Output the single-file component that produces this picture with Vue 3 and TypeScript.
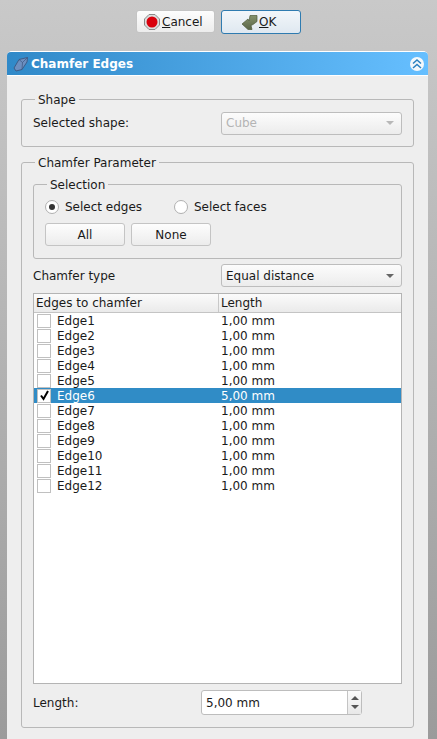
<script setup lang="ts">
interface EdgeRow {
  name: string
  length: string
  checked: boolean
}

const edges: EdgeRow[] = Array.from({ length: 12 }, (_, i) => ({
  name: `Edge${i + 1}`,
  length: i === 5 ? '5,00 mm' : '1,00 mm',
  checked: i === 5,
}))
</script>

<template>
  <div class="page">
    <div class="actions">
      <button class="btn action cancel">
        <svg class="ico" width="16" height="16" viewBox="0 0 16 16">
          <path d="M5 .5h6L15.500 5v6L11 15.500H5L.5 11V5z" fill="#dcdcdc" stroke="#8a8a8a" />
          <circle cx="8" cy="8" r="5.500" fill="#d9000c" />
        </svg>
        <span><u>C</u>ancel</span>
      </button>
      <button class="btn action ok">
        <svg class="ico" width="17" height="16" viewBox="0 0 17 16">
          <defs>
            <linearGradient id="okFill" x1="0" y1="0" x2="0" y2="1">
              <stop offset="0" stop-color="#85926c" />
              <stop offset="1" stop-color="#5a6648" />
            </linearGradient>
          </defs>
          <path d="M1 10L7 5l1 2 1-5.500h7v6l-4 3-2 1 1 4H7z" fill="url(#okFill)" stroke="#4d5a3a" stroke-width=".7" />
        </svg>
        <span><u>O</u>K</span>
      </button>
    </div>

    <section class="panel">
      <header class="panel-head">
        <svg class="head-ico" width="16" height="16" viewBox="0 0 16 16">
          <path d="M1 12L6 3.500 14.500 1.500 14 6 9 13.500 3 15z" fill="#6d8fc0" stroke="#3c5680" stroke-width=".9" />
          <path d="M6 3.500l3.500 3L14.500 1.500M9.500 6.500L9 13.500" fill="none" stroke="#3c5680" stroke-width=".7" />
        </svg>
        <span class="head-title">Chamfer Edges</span>
        <span class="collapse">
          <svg width="10" height="10" viewBox="0 0 10 10">
            <path d="M1 4.500L5 1l4 3.500M1 9L5 5.500 9 9" fill="none" stroke="#2a80c0" stroke-width="1.500" />
          </svg>
        </span>
      </header>

      <div class="panel-body">
        <fieldset class="group shape-group">
          <legend>Shape</legend>
          <div class="form-row">
            <span class="lbl">Selected shape:</span>
            <div class="combo disabled">
              <span>Cube</span>
              <i class="arrow"></i>
            </div>
          </div>
        </fieldset>

        <fieldset class="group param-group">
          <legend>Chamfer Parameter</legend>

          <fieldset class="group selection">
            <legend>Selection</legend>
            <div class="radios">
              <label class="radio first"><i class="dot on"></i>Select edges</label>
              <label class="radio"><i class="dot"></i>Select faces</label>
            </div>
            <div class="sel-buttons">
              <button class="btn small">All</button>
              <button class="btn small">None</button>
            </div>
          </fieldset>

          <div class="form-row type-row">
            <span class="lbl">Chamfer type</span>
            <div class="combo">
              <span>Equal distance</span>
              <i class="arrow"></i>
            </div>
          </div>

          <div class="table">
            <div class="thead">
              <div class="th name-col">Edges to chamfer</div>
              <div class="th">Length</div>
            </div>
            <div class="tbody">
              <div v-for="edge in edges" :key="edge.name" class="tr" :class="{ selected: edge.checked }">
                <div class="name-col cell">
                  <i class="check">
                    <svg v-if="edge.checked" width="11" height="11" viewBox="0 0 11 11">
                      <path d="M2 5.500l2.500 3.500L9 1" fill="none" stroke="#000" stroke-width="2" />
                    </svg>
                  </i>
                  <span class="cell-text">{{ edge.name }}</span>
                </div>
                <div class="cell len"><span class="cell-text">{{ edge.length }}</span></div>
              </div>
            </div>
          </div>

          <div class="length-row">
            <span class="lbl">Length:</span>
            <div class="spin">
              <span class="spin-val">5,00 mm</span>
              <div class="spin-btns">
                <i class="up"></i>
                <i class="down"></i>
              </div>
            </div>
          </div>
        </fieldset>
      </div>
    </section>
  </div>
</template>

<style>
html,
body {
  margin: 0;
  height: 100%;
  overflow: hidden;
}
</style>

<style scoped>
.page {
  width: 437px;
  height: 739px;
  overflow: hidden;
  box-sizing: border-box;
  padding-top: 10px;
  background: linear-gradient(180deg, #c9c9c9 0%, #9b9b9b 100%);
  font-family: "DejaVu Sans", sans-serif;
  font-size: 12px;
  color: #1a1a1a;
}

.actions {
  display: flex;
  justify-content: center;
  gap: 6px;
  height: 24px;
  margin-bottom: 17px;
}

.btn {
  box-sizing: border-box;
  font: inherit;
  color: inherit;
  padding: 0;
  border: 1px solid #c4c4c4;
  border-radius: 3px;
  background: linear-gradient(180deg, #fdfdfd, #ececec);
  display: flex;
  align-items: center;
  justify-content: center;
}

.action {
  height: 24px;
  justify-content: flex-start;
}

.action.cancel {
  width: 79px;
  height: 23px;
  padding-left: 7px;
  gap: 2px;
}

.action.ok {
  width: 80px;
  padding-left: 19px;
  gap: 1px;
  border-color: #2f7bb0;
  background: linear-gradient(180deg, #f2f6fa, #dfe8f0);
}

.ico {
  flex: none;
}

.panel {
  width: 421px;
  margin-left: 7px;
  height: 700px;
  background: #eeeeee;
  border-radius: 5px 5px 0 0;
  border-top: 1px solid #fff;
}

.panel-head {
  height: 23px;
  display: flex;
  align-items: center;
  padding: 0 4px 0 6px;
  background: linear-gradient(90deg, #3089c8 0%, #66bfff 100%);
  border-radius: 4px 4px 0 0;
  border-bottom: 1px solid #fff;
}

.head-ico {
  margin-right: 2px;
}

.head-title {
  flex: 1;
  color: #fff;
  font-weight: bold;
}

.collapse {
  width: 14px;
  height: 14px;
  border-radius: 50%;
  background: #f4f8fb;
  display: flex;
  align-items: center;
  justify-content: center;
}

.panel-body {
  padding: 16px 14px 0;
}

.group {
  box-sizing: border-box;
  margin: 0;
  padding: 0;
  border: 1px solid #b8b8b8;
  border-radius: 3px;
  min-width: 0;
}

.group legend {
  padding: 1px 3px 0;
  margin-left: 2px;
  line-height: 14px;
}

.shape-group {
  height: 55px;
  padding: 0 11px;
  margin-bottom: 8px;
}

.param-group {
  padding: 6px 11px 0;
  height: 573px;
}

.form-row {
  display: flex;
  align-items: center;
  justify-content: space-between;
  height: 24px;
}

.shape-group .form-row {
  margin-top: 4px;
}

.combo {
  box-sizing: border-box;
  width: 181px;
  height: 23px;
  border: 1px solid #bdbdbd;
  border-radius: 3px;
  background: linear-gradient(180deg, #fcfcfc, #ececec);
  display: flex;
  align-items: center;
  justify-content: space-between;
  padding: 0 7px 0 4px;
}

.combo.disabled {
  color: #b4b4b4;
}

.arrow {
  width: 0;
  height: 0;
  border-left: 4px solid transparent;
  border-right: 4px solid transparent;
  border-top: 4px solid #666;
}

.combo.disabled .arrow {
  border-top-color: #b8b8b8;
}

.selection {
  height: 83px;
  padding: 0 11px;
}

.selection legend {
  line-height: 16px;
}

.radios {
  display: flex;
  height: 20px;
  align-items: center;
  margin-top: 4px;
}

.radio {
  display: flex;
  align-items: center;
  gap: 6px;
}

.radio.first {
  width: 129px;
}

.dot {
  box-sizing: border-box;
  width: 14px;
  height: 14px;
  border: 1px solid #b0b0b0;
  border-radius: 50%;
  background: #fff;
  display: flex;
  align-items: center;
  justify-content: center;
}

.dot.on::after {
  content: "";
  width: 6px;
  height: 6px;
  border-radius: 50%;
  background: #333;
}

.sel-buttons {
  display: flex;
  gap: 6px;
  margin-top: 6px;
}

.btn.small {
  width: 80px;
  height: 23px;
}

.type-row {
  margin-top: 5px;
  height: 23px;
}

.table {
  box-sizing: border-box;
  margin-top: 6px;
  height: 391px;
  border: 1px solid #b4b4b4;
  background: #fff;
}

.thead {
  display: flex;
  height: 18px;
  background: linear-gradient(180deg, #fbfbfb, #eaeaea);
  border-bottom: 1px solid #c4c4c4;
}

.th {
  padding-left: 2px;
  line-height: 18px;
}

.th.name-col {
  border-right: 1px solid #c8c8c8;
}

.name-col {
  box-sizing: border-box;
  width: 185px;
}

.tr {
  display: flex;
  height: 15px;
  line-height: 15px;
}

.tr.selected {
  background: #308cc6;
  color: #fff;
}

.cell {
  display: flex;
  align-items: center;
}

.cell-text {
  padding-top: 1px;
}

.check {
  box-sizing: border-box;
  width: 14px;
  height: 14px;
  margin: 0 6px 0 3px;
  border: 1px solid #c0c0c0;
  background: #fff;
  display: flex;
  align-items: center;
  justify-content: center;
}

.len {
  padding-left: 2px;
}

.length-row {
  display: flex;
  align-items: center;
  margin-top: 6px;
  height: 25px;
}

.length-row .lbl {
  width: 168px;
}

.spin {
  box-sizing: border-box;
  width: 161px;
  height: 25px;
  border: 1px solid #bdbdbd;
  border-radius: 3px;
  background: #fff;
  display: flex;
  align-items: center;
}

.spin-val {
  flex: 1;
  padding-left: 4px;
}

.spin-btns {
  box-sizing: border-box;
  width: 14px;
  height: 100%;
  border-left: 1px solid #c4c4c4;
  background: linear-gradient(180deg, #fbfbfb, #e8e8e8);
  display: flex;
  flex-direction: column;
  align-items: center;
  justify-content: center;
  gap: 5px;
}

.up {
  width: 0;
  height: 0;
  border-left: 4px solid transparent;
  border-right: 4px solid transparent;
  border-bottom: 4px solid #555;
}

.down {
  width: 0;
  height: 0;
  border-left: 4px solid transparent;
  border-right: 4px solid transparent;
  border-top: 4px solid #555;
}
</style>
